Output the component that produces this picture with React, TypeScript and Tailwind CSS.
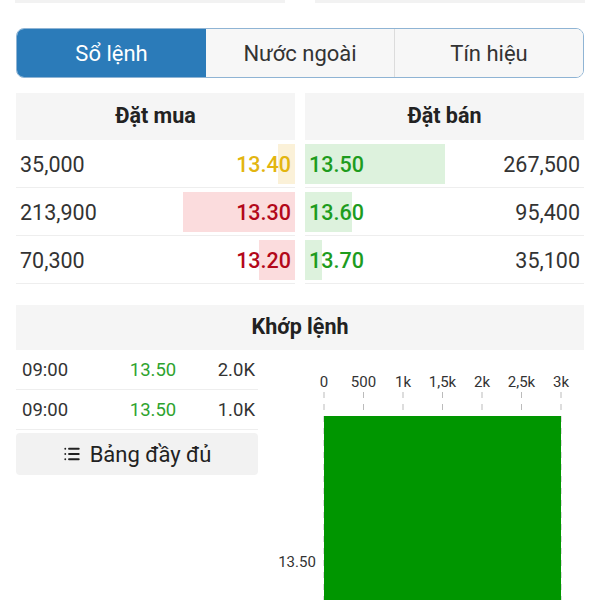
import { List } from "lucide-react";

const bids = [
  { qty: "35,000", price: "13.40", bar: 17, color: "text-[#e3b50f]", bg: "bg-[#fbf1d8]" },
  { qty: "213,900", price: "13.30", bar: 112, color: "text-[#b3081a]", bg: "bg-[#fbdcdd]" },
  { qty: "70,300", price: "13.20", bar: 36, color: "text-[#b3081a]", bg: "bg-[#fbdcdd]" },
];

const asks = [
  { qty: "267,500", price: "13.50", bar: 140 },
  { qty: "95,400", price: "13.60", bar: 47 },
  { qty: "35,100", price: "13.70", bar: 17 },
];

const trades = [
  { time: "09:00", price: "13.50", vol: "2.0K" },
  { time: "09:00", price: "13.50", vol: "1.0K" },
];

const ticks = ["0", "500", "1k", "1,5k", "2k", "2,5k", "3k"];

function VolumeChart() {
  const x0 = 54;
  const step = 39.5;
  return (
    <svg width="314" height="250" className="block">
      {ticks.map((t, i) => (
        <g key={t}>
          <text x={x0 + i * step} y={37} textAnchor="middle" fontSize="15" fill="#333" fontFamily="Roboto, sans-serif">
            {t}
          </text>
          <line x1={x0 + i * step} y1={42} x2={x0 + i * step} y2={250} stroke="#bbb" strokeWidth="1" strokeDasharray="6 6" />
        </g>
      ))}
      <rect x={x0} y={66} width={237} height={190} fill="#009600" />
      <text x={27} y={217} textAnchor="middle" fontSize="15" fill="#333" fontFamily="Roboto, sans-serif">
        13.50
      </text>
    </svg>
  );
}

export default function App() {
  return (
    <div className="w-[600px] h-[600px] overflow-hidden bg-white font-['Roboto',sans-serif] text-[#333]">
      <div className="flex justify-between px-[15px]">
        <div className="w-[270px] h-[3px] bg-[#f2f2f2]" />
        <div className="w-[270px] h-[3px] bg-[#f2f2f2]" />
      </div>

      <div className="mx-4 mt-[25px] h-[50px] flex rounded-lg border border-[#8fb4d4] overflow-hidden text-[22px]">
        <div className="w-[189px] flex items-center justify-center bg-[#2b7bb9] text-white">Sổ lệnh</div>
        <div className="flex-1 flex items-center justify-center bg-[#f7f7f7] text-[#333]">Nước ngoài</div>
        <div className="flex-1 flex items-center justify-center bg-[#f7f7f7] text-[#333] border-l border-[#dcdcdc]">Tín hiệu</div>
      </div>

      <div className="mx-4 mt-[15px] flex gap-[10px]">
        <div className="flex-1">
          <div className="h-[47px] bg-[#f5f5f5] flex items-center justify-center text-[21.5px] font-bold text-[#222]">Đặt mua</div>
          {bids.map((b) => (
            <div key={b.price} className="relative h-[48px] border-b border-[#eeeeee] flex items-center justify-between px-1 pt-[3px] text-[21.5px]">
              <div className={`absolute right-0 top-[4px] bottom-[3px] ${b.bg}`} style={{ width: b.bar }} />
              <span className="relative">{b.qty}</span>
              <span className={`relative font-medium ${b.color}`}>{b.price}</span>
            </div>
          ))}
        </div>
        <div className="flex-1">
          <div className="h-[47px] bg-[#f5f5f5] flex items-center justify-center text-[21.5px] font-bold text-[#222]">Đặt bán</div>
          {asks.map((a) => (
            <div key={a.price} className="relative h-[48px] border-b border-[#eeeeee] flex items-center justify-between px-1 pt-[3px] text-[21.5px]">
              <div className="absolute left-0 top-[4px] bottom-[3px] bg-[#ddf2dd]" style={{ width: a.bar }} />
              <span className="relative font-medium text-[#1e9c1e]">{a.price}</span>
              <span className="relative">{a.qty}</span>
            </div>
          ))}
        </div>
      </div>

      <div className="mx-4 mt-[21px] h-[45px] bg-[#f5f5f5] flex items-center justify-center text-[21.5px] font-bold text-[#222]">
        Khớp lệnh
      </div>

      <div className="flex">
        <div className="ml-4 w-[242px]">
          {trades.map((t, i) => (
            <div key={i} className="relative h-[40px] border-b border-[#eeeeee] flex items-center justify-between pl-[6px] pr-[3px] pt-[2px] text-[18.5px]">
              <span>{t.time}</span>
              <span className="absolute left-[137px] -translate-x-1/2 text-[#2ea32e]">{t.price}</span>
              <span>{t.vol}</span>
            </div>
          ))}
          <div className="mt-[3px] h-[42px] bg-[#f2f2f2] rounded flex items-center justify-center gap-[9px] text-[22px] text-[#222]">
            <List size={18} strokeWidth={2.5} />
            <span>Bảng đầy đủ</span>
          </div>
        </div>
        <div className="ml-[12px]">
          <VolumeChart />
        </div>
      </div>
    </div>
  );
}
